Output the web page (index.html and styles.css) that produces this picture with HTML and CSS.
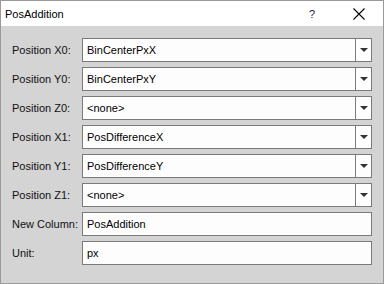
FILE: index.html
```html
<!DOCTYPE html>
<html lang="en">
  <head>
    <meta charset="UTF-8" />
    <title>PosAddition</title>
    <link rel="stylesheet" href="styles.css">
  </head>
  <body>
    <div class="window">
      <div class="titlebar">
        <span class="title">PosAddition</span>
        <span class="help">?</span>
        <span class="close">
          <svg width="12" height="12" viewBox="0 0 12 12">
            <path d="M0.5 0.5 L11.5 11.5 M11.5 0.5 L0.5 11.5" stroke="#000" stroke-width="1.1" fill="none" />
          </svg>
        </span>
      </div>
      <div class="form">
        <label>Position X0:</label>
        <div class="combo"><span class="val">BinCenterPxX</span><span class="btn"><i class="arrow"></i></span></div>
        <label>Position Y0:</label>
        <div class="combo"><span class="val">BinCenterPxY</span><span class="btn"><i class="arrow"></i></span></div>
        <label>Position Z0:</label>
        <div class="combo"><span class="val">&lt;none&gt;</span><span class="btn"><i class="arrow"></i></span></div>
        <label>Position X1:</label>
        <div class="combo"><span class="val">PosDifferenceX</span><span class="btn"><i class="arrow"></i></span></div>
        <label>Position Y1:</label>
        <div class="combo"><span class="val">PosDifferenceY</span><span class="btn"><i class="arrow"></i></span></div>
        <label>Position Z1:</label>
        <div class="combo"><span class="val">&lt;none&gt;</span><span class="btn"><i class="arrow"></i></span></div>
        <label>New Column:</label>
        <div class="field">PosAddition</div>
        <label>Unit:</label>
        <div class="field">px</div>
      </div>
    </div>
  </body>
</html>
```

FILE: styles.css
```css
body {
  margin: 0;
  font-family: "Liberation Sans", Arial, sans-serif;
  font-size: 11px;
  color: #000;
}
.window {
  width: 384px;
  height: 284px;
  box-sizing: border-box;
  border: 1px solid #9a9a9a;
  background-color: #d4d4d4;
}
.titlebar {
  height: 25px;
  background-color: #fff;
  display: flex;
  align-items: center;
  padding-left: 4px;
}
.title {
  flex: 1;
}
.help {
  width: 10px;
  margin-right: 34px;
  color: #1a1a40;
}
.close {
  width: 12px;
  height: 12px;
  margin-right: 18px;
  display: flex;
}
.form {
  display: grid;
  grid-template-columns: 70px 290px;
  grid-auto-rows: 24px;
  row-gap: 5px;
  padding: 12px 0 0 11px;
}
label {
  display: flex;
  align-items: center;
  color: #111;
}
.combo,
.field {
  box-sizing: border-box;
  border: 1px solid #7a7a7a;
  background-color: #fdfdfd;
  display: flex;
  align-items: center;
}
.field {
  padding-left: 4px;
}
.val {
  flex: 1;
  padding-left: 4px;
}
.btn {
  width: 15px;
  height: 100%;
  border-left: 1px solid #7a7a7a;
  display: flex;
  align-items: center;
  justify-content: center;
}
.arrow {
  width: 0;
  height: 0;
  border-left: 4px solid transparent;
  border-right: 4px solid transparent;
  border-top: 4px solid #333;
}
```
